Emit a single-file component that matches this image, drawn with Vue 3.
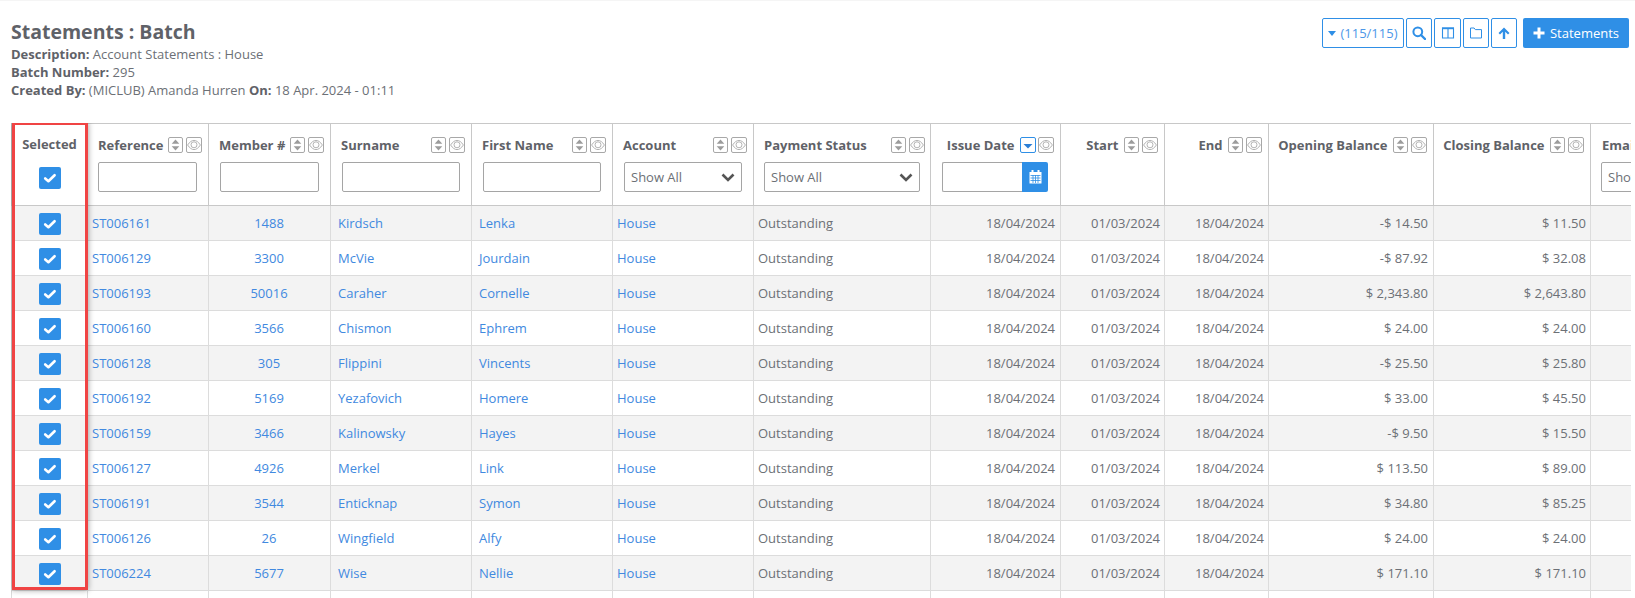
<template>
  <div class="page">
    <div class="page-head">
      <div class="batch-info">
        <h1>Statements : Batch</h1>
        <p><strong>Description:</strong> Account Statements : House</p>
        <p><strong>Batch Number:</strong> 295</p>
        <p><strong>Created By:</strong> (MICLUB) Amanda Hurren <strong>On:</strong> 18 Apr. 2024 - 01:11</p>
      </div>
      <div class="toolbar">
        <button class="tool-btn count-btn">
          <svg class="caret" viewBox="0 0 10 6"><path d="M0 0h10L5 6z" /></svg>
          (115/115)
        </button>
        <button class="tool-btn icon-btn">
          <svg viewBox="0 0 14 14" width="14" height="14"><circle cx="5.8" cy="5.8" r="4.4" fill="none" stroke="currentColor" stroke-width="2" /><path d="M9 9l4 4" stroke="currentColor" stroke-width="2.4" stroke-linecap="round" /></svg>
        </button>
        <button class="tool-btn icon-btn wide">
          <svg viewBox="0 0 14 14" width="14" height="14"><path d="M1.5 2h11v10h-11zM7 2v10" fill="none" stroke="currentColor" stroke-width="1.1" /><path d="M1 1.500h12V3.200H1z" fill="currentColor" /></svg>
        </button>
        <button class="tool-btn icon-btn">
          <svg viewBox="0 0 14 14" width="14" height="14"><path d="M1.500 2h3.600l1.200 1.600h6.200v8.400h-11z" fill="none" stroke="currentColor" stroke-width="1" stroke-linejoin="round" /></svg>
        </button>
        <button class="tool-btn icon-btn">
          <svg viewBox="0 0 14 14" width="14" height="14"><path d="M7 1.500L12.500 7 11 8.500 8.200 5.800V13H5.800V5.800L3 8.500 1.500 7z" fill="currentColor" /></svg>
        </button>
        <button class="add-btn">
          <svg viewBox="0 0 12 12" width="12" height="12"><path d="M4.500 0.500h3v4h4v3h-4v4h-3v-4h-4v-3h4z" fill="#fff" /></svg>
          Statements
        </button>
      </div>
    </div>

    <div class="table-wrap">
      <table class="grid">
        <colgroup>
          <col v-for="col in columns" :key="col.label" :style="{ width: col.width + 'px' }" />
        </colgroup>
        <thead>
          <tr>
            <th class="select-col">
              <div class="selected-title">Selected</div>
              <span class="check"><svg viewBox="0 0 14 14" width="14" height="14"><path d="M2.200 7.400l3.200 2.800 6.200-6" fill="none" stroke="#fff" stroke-width="2.600" stroke-linecap="round" stroke-linejoin="round" /></svg></span>
            </th>
            <th v-for="col in columns.slice(1)" :key="col.label" :class="col.cls">
              <div :class="['head-line', col.align]">
                <span class="head-label">{{ col.label }}</span>
                <template v-if="col.label !== 'Email'">
                  <span :class="['sort-btn', { active: col.active }]">
                    <svg v-if="col.active" viewBox="0 0 14 14" width="14" height="14"><path d="M2.500 6h9L7 10.500z" fill="#2c7fd6" /></svg>
                    <svg v-else viewBox="0 0 13 14" width="13" height="14"><path d="M6.500 1.500l3.800 4.200H2.700zM6.500 12.500L2.700 8.300h7.600z" fill="#9c9c9c" /></svg>
                  </span>
                  <span class="eye-btn">
                    <svg viewBox="0 0 14 14" width="14" height="14"><path d="M.6 7C2.600 4 4.700 2.400 7 2.400S11.400 4 13.400 7c-2 3-4.100 4.600-6.400 4.600S2.600 10 .6 7z" fill="none" stroke="#b4b4b4" /><circle cx="7" cy="6.800" r="3" fill="none" stroke="#b4b4b4" /></svg>
                  </span>
                </template>
              </div>
              <input v-if="col.filter === 'text'" class="filter" type="text" />
              <div v-else-if="col.filter === 'select'" class="select-box">
                <span>Show All</span>
                <svg viewBox="0 0 14 9" width="14" height="9"><path d="M1.500 1.500L7 7l5.500-5.500" fill="none" stroke="#555" stroke-width="2.600" /></svg>
              </div>
              <div v-else-if="col.filter === 'date'" class="date-box">
                <input class="date-input" type="text" />
                <span class="date-btn">
                  <svg viewBox="0 0 13 14" width="13" height="14"><path d="M2.500 0h2v2.500h-2zM8.500 0h2v2.500h-2zM.5 2h12v11.500H.5z" fill="#fff" /><path d="M1.500 5.500h10M1.500 8h10M1.500 10.500h10M4 5v8M6.500 5v8M9 5v8" stroke="#2f8fe6" stroke-width=".8" /></svg>
                </span>
              </div>
            </th>
          </tr>
        </thead>
        <tbody>
          <tr v-for="row in rows" :key="row.ref">
            <td class="select-col"><span class="check"><svg viewBox="0 0 14 14" width="14" height="14"><path d="M2.200 7.400l3.200 2.800 6.200-6" fill="none" stroke="#fff" stroke-width="2.600" stroke-linecap="round" stroke-linejoin="round" /></svg></span></td>
            <td><a>{{ row.ref }}</a></td>
            <td class="center"><a>{{ row.member }}</a></td>
            <td class="pad"><a>{{ row.surname }}</a></td>
            <td class="pad"><a>{{ row.first }}</a></td>
            <td><a>House</a></td>
            <td>Outstanding</td>
            <td class="right">18/04/2024</td>
            <td class="right near">01/03/2024</td>
            <td class="right near">18/04/2024</td>
            <td class="right">{{ row.opening }}</td>
            <td class="right near">{{ row.closing }}</td>
            <td></td>
          </tr>
          <tr class="cut-row">
            <td v-for="col in columns" :key="col.label"></td>
          </tr>
        </tbody>
      </table>
      <div class="highlight"></div>
    </div>
  </div>
</template>

<script setup>
const columns = [
  { label: 'Selected', width: 76 },
  { label: 'Reference', width: 121, filter: 'text', cls: 'snug' },
  { label: 'Member #', width: 122, filter: 'text' },
  { label: 'Surname', width: 141, filter: 'text' },
  { label: 'First Name', width: 141, filter: 'text' },
  { label: 'Account', width: 141, filter: 'select' },
  { label: 'Payment Status', width: 177, filter: 'select', cls: 'roomy' },
  { label: 'Issue Date', width: 130, filter: 'date', align: 'right', active: true, cls: 'date-col' },
  { label: 'Start', width: 104, align: 'right' },
  { label: 'End', width: 104, align: 'right' },
  { label: 'Opening Balance', width: 165, align: 'right' },
  { label: 'Closing Balance', width: 157, align: 'right' },
  { label: 'Email', width: 120, filter: 'select', cls: 'email-col' }
];

const rows = [
  { ref: 'ST006161', member: '1488', surname: 'Kirdsch', first: 'Lenka', opening: '-$ 14.50', closing: '$ 11.50' },
  { ref: 'ST006129', member: '3300', surname: 'McVie', first: 'Jourdain', opening: '-$ 87.92', closing: '$ 32.08' },
  { ref: 'ST006193', member: '50016', surname: 'Caraher', first: 'Cornelle', opening: '$ 2,343.80', closing: '$ 2,643.80' },
  { ref: 'ST006160', member: '3566', surname: 'Chismon', first: 'Ephrem', opening: '$ 24.00', closing: '$ 24.00' },
  { ref: 'ST006128', member: '305', surname: 'Flippini', first: 'Vincents', opening: '-$ 25.50', closing: '$ 25.80' },
  { ref: 'ST006192', member: '5169', surname: 'Yezafovich', first: 'Homere', opening: '$ 33.00', closing: '$ 45.50' },
  { ref: 'ST006159', member: '3466', surname: 'Kalinowsky', first: 'Hayes', opening: '-$ 9.50', closing: '$ 15.50' },
  { ref: 'ST006127', member: '4926', surname: 'Merkel', first: 'Link', opening: '$ 113.50', closing: '$ 89.00' },
  { ref: 'ST006191', member: '3544', surname: 'Enticknap', first: 'Symon', opening: '$ 34.80', closing: '$ 85.25' },
  { ref: 'ST006126', member: '26', surname: 'Wingfield', first: 'Alfy', opening: '$ 24.00', closing: '$ 24.00' },
  { ref: 'ST006224', member: '5677', surname: 'Wise', first: 'Nellie', opening: '$ 171.10', closing: '$ 171.10' }
];
</script>

<style>
html,
body {
  margin: 0;
  height: 598px;
  overflow: hidden;
  background: #fff;
}
</style>

<style scoped>
.page {
  font-family: "Open Sans", "Liberation Sans", sans-serif;
  font-size: 13px;
  color: #6c7076;
  border-top: 1px solid #f5f5f5;
}

.page-head {
  display: flex;
  justify-content: space-between;
  height: 122px;
  padding: 0 6px 0 11px;
  box-sizing: border-box;
}

.batch-info h1 {
  margin: 17px 0 0;
  font-size: 19.5px;
  line-height: 27px;
  font-weight: 700;
  color: #5f6268;
}

.batch-info p {
  margin: 0;
  line-height: 18px;
}

.batch-info strong {
  color: #5f6268;
}

.toolbar {
  display: flex;
  align-items: flex-start;
  padding-top: 17px;
}

.tool-btn {
  height: 30px;
  margin-right: 2px;
  padding: 0;
  background: #fff;
  border: 1px solid #2f8fe6;
  border-radius: 2px;
  color: #2f8fe6;
  font: inherit;
  display: flex;
  align-items: center;
  justify-content: center;
}

.count-btn {
  width: 82px;
  gap: 4px;
  color: #4d97e8;
}

.caret {
  width: 8px;
  height: 5px;
  fill: #2f8fe6;
}

.icon-btn {
  width: 26px;
}

.icon-btn.wide {
  width: 27px;
}

.add-btn {
  width: 106px;
  height: 30px;
  margin-left: 4px;
  padding: 0;
  border: none;
  border-radius: 2px;
  background: #2f8fe6;
  color: #fff;
  font: inherit;
  display: flex;
  align-items: center;
  justify-content: center;
  gap: 5px;
}

.table-wrap {
  position: relative;
  width: 1620px;
  margin-left: 11px;
  overflow: hidden;
}

.grid {
  table-layout: fixed;
  width: 1680px;
  border-collapse: collapse;
  border-top: 1px solid #c8c8c8;
}

.grid th {
  height: 81px;
  padding: 0 11px;
  vertical-align: top;
  text-align: left;
  font-weight: 600;
  border-right: 1px solid #c8c8c8;
  border-left: 1px solid #c8c8c8;
  border-bottom: 1px solid #c8c8c8;
}

.grid th.snug {
  padding-left: 10px;
}

.grid th.roomy {
  padding-left: 10px;
  padding-right: 10px;
}

.grid th.date-col {
  padding-right: 12px;
}

.grid th.email-col {
  padding-left: 10px;
}

.grid td {
  height: 34px;
  padding: 0 5px 0 4px;
  border: 1px solid #dcdcdc;
  white-space: nowrap;
  overflow: hidden;
}

.grid tbody tr:nth-child(odd) td {
  background: #f3f3f3;
}

.grid a {
  color: #4189e0;
}

.grid td.center {
  text-align: center;
}

.grid td.right {
  text-align: right;
}

.grid td.right.near {
  padding-right: 4px;
}

.grid td.pad {
  padding-left: 7px;
}

.grid th.select-col {
  padding: 0;
  text-align: center;
}

.grid td.select-col {
  height: 33px;
  padding: 1px 0 0;
  text-align: center;
}

.selected-title {
  margin-top: 12px;
  height: 16px;
  line-height: 16px;
  font-weight: 700;
  color: #5f6268;
}

.check {
  display: inline-flex;
  align-items: center;
  justify-content: center;
  width: 22px;
  height: 22px;
  border-radius: 2px;
  background: #2f8fe6;
  vertical-align: middle;
}

.select-col .selected-title + .check {
  margin-top: 15px;
}

.head-line {
  display: flex;
  align-items: center;
  height: 17px;
  margin: 13px -5px 8px 0;
}

.head-line.right {
  justify-content: flex-end;
}

.head-label {
  font-weight: 700;
  color: #5f6268;
  white-space: nowrap;
  margin: 0 auto 2px -1px;
}

.snug .head-label,
.roomy .head-label {
  margin-left: 0;
}

.email-col .head-label {
  margin-left: 1px;
}

.head-line.right .head-label {
  margin: 0 5.500px 2px 0;
}

.sort-btn,
.eye-btn {
  flex: none;
  box-sizing: border-box;
  height: 16px;
  border: 1px solid #a8a8a8;
  border-radius: 2px;
  display: flex;
  align-items: center;
  justify-content: center;
  overflow: hidden;
}

.sort-btn {
  width: 15px;
  margin: 0 3px 1px 0;
}

.sort-btn.active {
  width: 16px;
  margin-right: 2px;
  border: 1px solid #2f8fe6;
}

.eye-btn {
  width: 16px;
  margin-bottom: 1px;
}

.date-col .head-line {
  margin-right: -6px;
}

.filter,
.date-input {
  display: block;
  box-sizing: border-box;
  width: 100%;
  height: 30px;
  margin: 0;
  padding: 0 6px;
  background: #fff;
  border: 1px solid #a5a5a5;
  border-radius: 2px;
}

.select-box {
  box-sizing: border-box;
  height: 30px;
  padding: 0 6px;
  background: #fff;
  border: 1px solid #a5a5a5;
  border-radius: 2px;
  display: flex;
  align-items: center;
  justify-content: space-between;
  font-weight: 400;
  color: #6c7076;
}

.date-box {
  display: flex;
  height: 30px;
}

.date-input {
  flex: 1;
  min-width: 0;
  border-right: none;
  border-radius: 2px 0 0 2px;
}

.date-btn {
  flex: none;
  width: 26px;
  background: #2f8fe6;
  border-radius: 0 2px 2px 0;
  display: flex;
  align-items: center;
  justify-content: center;
}

.highlight {
  position: absolute;
  left: 1px;
  top: -1px;
  width: 76px;
  height: 468px;
  box-sizing: border-box;
  border: 3px solid #f04444;
  box-shadow: 0 0 6px rgba(0, 0, 0, 0.4);
  pointer-events: none;
}
</style>
